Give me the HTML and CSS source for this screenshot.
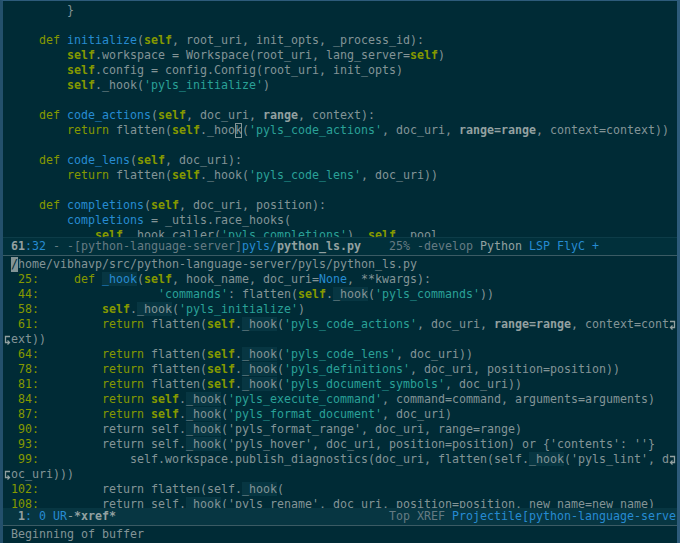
FILE: index.html
```html
<!DOCTYPE html>
<html lang="en">
<head>
    <meta charset="UTF-8">
    <title>python_ls.py - Emacs</title>
    <link rel="stylesheet" href="styles.css">
</head>
<body>
    <div class="frame">
        <div class="window top">
<div class="line">        }</div>
<div class="line"></div>
<div class="line">    <span class="k">def</span> <span class="f">initialize</span>(<span class="s">self</span>, root_uri, init_opts, _process_id):</div>
<div class="line">        <span class="s">self</span>.workspace = Workspace(root_uri, lang_server=<span class="s">self</span>)</div>
<div class="line">        <span class="s">self</span>.config = config.Config(root_uri, init_opts)</div>
<div class="line">        <span class="s">self</span>._hook(<span class="q">'pyls_initialize'</span>)</div>
<div class="line"></div>
<div class="line">    <span class="k">def</span> <span class="f">code_actions</span>(<span class="s">self</span>, doc_uri, <span class="b">range</span>, context):</div>
<div class="line">        <span class="k">return</span> flatten(<span class="s">self</span>._hoo<span class="cursor-box">k</span>(<span class="q">'pyls_code_actions'</span>, doc_uri, <span class="b">range=range</span>, context=context))</div>
<div class="line"></div>
<div class="line">    <span class="k">def</span> <span class="f">code_lens</span>(<span class="s">self</span>, doc_uri):</div>
<div class="line">        <span class="k">return</span> flatten(<span class="s">self</span>._hook(<span class="q">'pyls_code_lens'</span>, doc_uri))</div>
<div class="line"></div>
<div class="line">    <span class="k">def</span> <span class="f">completions</span>(<span class="s">self</span>, doc_uri, position):</div>
<div class="line">        <span class="v">completions</span> = _utils.race_hooks(</div>
<div class="line">            <span class="s">self</span>._hook_caller(<span class="q">'pyls_completions'</span>), <span class="s">self</span>._pool</div>
        </div>
        <div class="modeline inactive"><span class="mb">61</span><span class="mblue">:32</span><span class="md"> - -[python-language-server]</span><span class="mblue">pyls/</span><span class="mb">python_ls.py</span><span class="md">    25% -develop</span> <span class="mt">Python</span> <span class="mblue">LSP FlyC +</span></div>
        <div class="window bottom">
<div class="line"><span class="cursor">/</span>home/vibhavp/src/python-language-server/pyls/python_ls.py</div>
<div class="line"><span class="n"> 25:</span>     <span class="k">def</span> <span class="f h">_hook</span>(<span class="s">self</span>, hook_name, doc_uri=<span class="c">None</span>, **kwargs):</div>
<div class="line"><span class="n"> 44:</span>                 <span class="q">'commands'</span>: flatten(<span class="s">self</span>.<span class="h">_hook</span>(<span class="q">'pyls_commands'</span>))</div>
<div class="line"><span class="n"> 58:</span>         <span class="s">self</span>.<span class="h">_hook</span>(<span class="q">'pyls_initialize'</span>)</div>
<div class="line"><span class="n"> 61:</span>         <span class="k">return</span> flatten(<span class="s">self</span>.<span class="h">_hook</span>(<span class="q">'pyls_code_actions'</span>, doc_uri, <span class="b">range=range</span>, context=cont<svg class="wrap-r" width="8" height="15" viewBox="0 0 8 15"><path d="M1 4.5 H5.5 V10.5 H2" fill="none" stroke="#93a1a1" stroke-width="1.3"/><path d="M3.5 8.5 L1.5 10.5 L3.5 12.5" fill="none" stroke="#93a1a1" stroke-width="1.3"/></svg></div>
<div class="line"><svg class="wrap-l" width="8" height="15" viewBox="0 0 8 15"><path d="M7 4.5 H2.5 V10.5 H6" fill="none" stroke="#93a1a1" stroke-width="1.3"/><path d="M4.5 8.5 L6.5 10.5 L4.5 12.5" fill="none" stroke="#93a1a1" stroke-width="1.3"/></svg>ext))</div>
<div class="line"><span class="n"> 64:</span>         <span class="k">return</span> flatten(<span class="s">self</span>.<span class="h">_hook</span>(<span class="q">'pyls_code_lens'</span>, doc_uri))</div>
<div class="line"><span class="n"> 78:</span>         <span class="k">return</span> flatten(<span class="s">self</span>.<span class="h">_hook</span>(<span class="q">'pyls_definitions'</span>, doc_uri, position=position))</div>
<div class="line"><span class="n"> 81:</span>         <span class="k">return</span> flatten(<span class="s">self</span>.<span class="h">_hook</span>(<span class="q">'pyls_document_symbols'</span>, doc_uri))</div>
<div class="line"><span class="n"> 84:</span>         <span class="k">return</span> <span class="s">self</span>.<span class="h">_hook</span>(<span class="q">'pyls_execute_command'</span>, command=command, arguments=arguments)</div>
<div class="line"><span class="n"> 87:</span>         <span class="k">return</span> <span class="s">self</span>.<span class="h">_hook</span>(<span class="q">'pyls_format_document'</span>, doc_uri)</div>
<div class="line"><span class="n"> 90:</span>         return self.<span class="h">_hook</span>('pyls_format_range', doc_uri, range=range)</div>
<div class="line"><span class="n"> 93:</span>         return self.<span class="h">_hook</span>('pyls_hover', doc_uri, position=position) or {'contents': ''}</div>
<div class="line"><span class="n"> 99:</span>             self.workspace.publish_diagnostics(doc_uri, flatten(self.<span class="h">_hook</span>('pyls_lint', d<svg class="wrap-r" width="8" height="15" viewBox="0 0 8 15"><path d="M1 4.5 H5.5 V10.5 H2" fill="none" stroke="#93a1a1" stroke-width="1.3"/><path d="M3.5 8.5 L1.5 10.5 L3.5 12.5" fill="none" stroke="#93a1a1" stroke-width="1.3"/></svg></div>
<div class="line"><svg class="wrap-l" width="8" height="15" viewBox="0 0 8 15"><path d="M7 4.5 H2.5 V10.5 H6" fill="none" stroke="#93a1a1" stroke-width="1.3"/><path d="M4.5 8.5 L6.5 10.5 L4.5 12.5" fill="none" stroke="#93a1a1" stroke-width="1.3"/></svg>oc_uri)))</div>
<div class="line"><span class="n">102:</span>         return flatten(self.<span class="h">_hook</span>(</div>
<div class="line"><span class="n">108:</span>         return self.<span class="h">_hook</span>('pyls_rename', doc_uri, position=position, new_name=new_name)</div>
        </div>
        <div class="modeline active"> <span class="mb">1</span><span class="mblue">: 0 UR</span><span class="mt">-</span><span class="mb">*xref*</span>                                       <span class="md">Top XREF</span> <span class="mblue">Projectile[python-language-server]</span></div>
        <div class="echo">Beginning of buffer</div>
    </div>
</body>
</html>
```

FILE: styles.css
```css
body {
    margin: 0;
    background-color: #002b36;
    font-family: "DejaVu Sans Mono", monospace;
    font-size: 11.63px;
    color: #839496;
}

.frame {
    width: 680px;
    height: 543px;
    box-sizing: border-box;
    border-top: 1px solid #2d5b7b;
    border-left: 3px solid #23506c;
    border-right: 3px solid #2d5b7b;
    display: flex;
    flex-direction: column;
    overflow: hidden;
}

.window {
    flex-shrink: 0;
    box-sizing: border-box;
    padding: 0 8px;
    overflow: hidden;
}

.window.top {
    height: 236px;
    padding-top: 2px;
}

.window.bottom {
    height: 252px;
    padding-top: 1px;
}

.line {
    height: 15px;
    line-height: 15px;
    white-space: pre;
}

.wrap-r {
    display: inline-block;
    vertical-align: top;
}

.wrap-l {
    display: inline-block;
    vertical-align: top;
    margin-left: -8px;
}

/* syntax faces */
.k { color: #859900; }
.f { color: #268bd2; }
.s { color: #859900; font-weight: bold; }
.q { color: #2aa198; }
.b { color: #93a1a1; font-weight: bold; }
.c { color: #268bd2; }
.v { color: #268bd2; }
.n { color: #859900; }
.h { background-color: #073642; }

.cursor-box {
    display: inline-block;
    vertical-align: top;
    line-height: 15px;
    height: 15px;
    box-shadow: inset 0 0 0 1px #839496;
}

.cursor {
    display: inline-block;
    vertical-align: top;
    line-height: 15px;
    height: 15px;
    background-color: #839496;
    color: #002b36;
}

.modeline {
    flex-shrink: 0;
    height: 17px;
    line-height: 17px;
    padding-left: 8px;
    white-space: pre;
    overflow: hidden;
    border-bottom: 1px solid #3b5b64;
}

.modeline.inactive {
    background-color: #01303b;
    border-top: 1px solid #0d3c48;
}

.modeline.active {
    background-color: #073642;
}

.mb { color: #93a1a1; font-weight: bold; }
.mblue { color: #268bd2; }
.md { color: #657b83; }
.mt { color: #93a1a1; }

.echo {
    flex-shrink: 0;
    height: 17px;
    line-height: 17px;
    padding-left: 8px;
    white-space: pre;
}
```
